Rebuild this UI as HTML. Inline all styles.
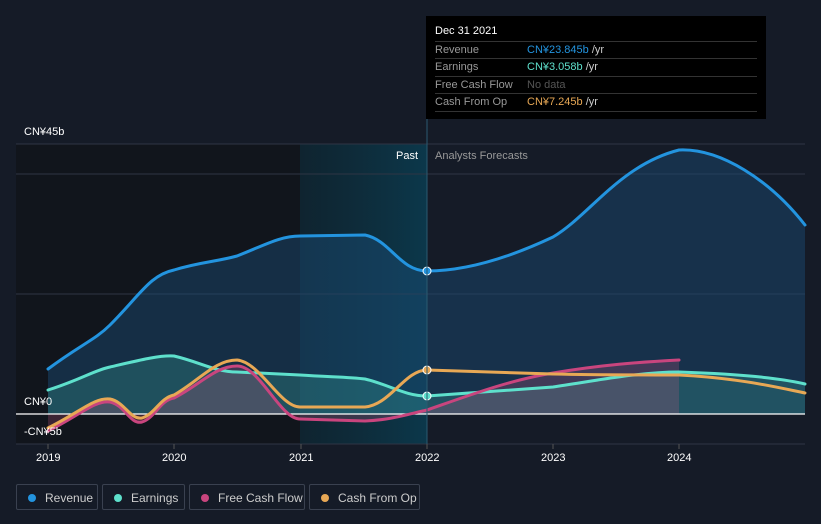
<!DOCTYPE html>
<html><head><meta charset="utf-8"><style>
body{margin:0;width:821px;height:524px;background:#151b27;font-family:"Liberation Sans",sans-serif;overflow:hidden;position:relative}
.t{position:absolute;font-size:11px;color:#fff}
.tip{position:absolute;left:426px;top:16px;width:340px;height:103px;background:#000}
.tip .h{position:absolute;left:9px;top:9px;font-size:11px;color:#fff}
.row{position:absolute;left:9px;width:322px;height:17px;border-top:1px solid #333;font-size:11px;line-height:17px;color:#999}
.row span{position:absolute;left:92px}
.lg{position:absolute;top:484px;height:26px;border:1px solid #3a4150;border-radius:2px;font-size:12px;color:#ccc;line-height:26px;box-sizing:border-box}
.lg i{position:absolute;left:11px;top:9px;width:8px;height:8px;border-radius:50%}
.lg b{font-weight:normal;position:absolute;left:28px}
</style></head><body>
<svg width="821" height="524" style="position:absolute;left:0;top:0">
<defs><linearGradient id="hl" x1="0" x2="1"><stop offset="0" stop-color="#0b2a36" stop-opacity=".6"/><stop offset="1" stop-color="#0b3b4f" stop-opacity=".9"/></linearGradient></defs>
<rect x="16" y="144" width="284" height="300" fill="#11151c"/>
<rect x="300" y="144" width="127" height="300" fill="url(#hl)"/>
<g stroke="#2e3544" stroke-width="1"><line x1="16" y1="144" x2="805" y2="144"/><line x1="16" y1="174" x2="805" y2="174"/><line x1="16" y1="294" x2="805" y2="294"/><line x1="16" y1="444" x2="805" y2="444"/></g>
<path d="M48,369 C80,345 95,340 110,325 C140,295 150,275 174,270 C200,262 215,262 237,256 C265,245 280,236 300,236 L365,235 C390,240 400,271 427,271 C460,271 500,262 553,237 C590,215 620,165 679,150 C720,148 770,180 805,225 L805,414 L48,414Z" fill="#1b4d78" fill-opacity=".45"/>
<path d="M48,390 C80,380 95,370 110,367 C140,360 160,355 174,356 C200,362 215,372 237,372 L300,375 C330,377 350,377 365,379 C390,385 405,396 427,396 L553,387 C600,380 640,372 679,372 C740,374 780,378 805,384 L805,414 L48,414Z" fill="#3fb8a6" fill-opacity=".25"/>
<path d="M48,431 C80,415 95,400 110,402 C125,405 130,425 142,422 C155,418 160,400 174,398 C200,385 215,366 237,366 C260,366 280,419 300,419 L365,421 C390,420 405,415 427,410 C470,395 510,380 553,373 C600,365 640,362 679,360 L679,414 L48,414Z" fill="#c0567f" fill-opacity=".25"/>
<line x1="16" y1="414" x2="805" y2="414" stroke="#fff" stroke-width="1.2"/>
<g fill="none" stroke-width="3" stroke-linecap="round">
<path d="M48,369 C80,345 95,340 110,325 C140,295 150,275 174,270 C200,262 215,262 237,256 C265,245 280,236 300,236 L365,235 C390,240 400,271 427,271 C460,271 500,262 553,237 C590,215 620,165 679,150 C720,148 770,180 805,225" stroke="#2394df"/>
<path d="M48,390 C80,380 95,370 110,367 C140,360 160,355 174,356 C200,362 215,372 237,372 L300,375 C330,377 350,377 365,379 C390,385 405,396 427,396 L553,387 C600,380 640,372 679,372 C740,374 780,378 805,384" stroke="#5ee0cc"/>
<path d="M48,431 C80,415 95,400 110,402 C125,405 130,425 142,422 C155,418 160,400 174,398 C200,385 215,366 237,366 C260,366 280,419 300,419 L365,421 C390,420 405,415 427,410 C470,395 510,380 553,373 C600,365 640,362 679,360" stroke="#c9457e"/>
<path d="M48,428 C80,412 95,397 110,399 C125,402 130,420 142,418 C155,414 160,398 174,395 C200,380 215,360 237,360 C260,362 280,407 300,407 L365,407 C390,405 405,370 427,370 L553,374 C600,375 640,375 679,375 C740,378 780,388 805,393" stroke="#e8a855"/>
</g>
<circle cx="427" cy="271" r="4" fill="#2394df" stroke="#fff" stroke-width="1"/>
<circle cx="427" cy="370" r="4" fill="#e8a855" stroke="#fff" stroke-width="1"/>
<circle cx="427" cy="396" r="4" fill="#5ee0cc" stroke="#fff" stroke-width="1"/>
<line x1="427" y1="119" x2="427" y2="444" stroke="#2a5a70" stroke-width="1"/>
<g stroke="#555" stroke-width="1"><line x1="48" y1="444" x2="48" y2="449"/><line x1="174" y1="444" x2="174" y2="449"/><line x1="301" y1="444" x2="301" y2="449"/><line x1="427" y1="444" x2="427" y2="449"/><line x1="553" y1="444" x2="553" y2="449"/><line x1="679" y1="444" x2="679" y2="449"/></g>
</svg>
<div class="t" style="left:24px;top:126px">CN¥45b</div>
<div class="t" style="left:24px;top:396px">CN¥0</div>
<div class="t" style="left:24px;top:426px">-CN¥5b</div>
<div class="t" style="left:396px;top:150px">Past</div>
<div class="t" style="left:435px;top:150px;color:#999">Analysts Forecasts</div>
<div class="t" style="left:36px;top:452px">2019</div>
<div class="t" style="left:162px;top:452px">2020</div>
<div class="t" style="left:289px;top:452px">2021</div>
<div class="t" style="left:415px;top:452px">2022</div>
<div class="t" style="left:541px;top:452px">2023</div>
<div class="t" style="left:667px;top:452px">2024</div>
<div class="tip"><div class="h">Dec 31 2021</div>
<div class="row" style="top:25px">Revenue<span style="color:#2394df">CN¥23.845b <em style="font-style:normal;color:#ccc">/yr</em></span></div>
<div class="row" style="top:42px">Earnings<span style="color:#5ee0cc">CN¥3.058b <em style="font-style:normal;color:#ccc">/yr</em></span></div>
<div class="row" style="top:60px">Free Cash Flow<span style="color:#555">No data</span></div>
<div class="row" style="top:77px">Cash From Op<span style="color:#e8a855">CN¥7.245b <em style="font-style:normal;color:#ccc">/yr</em></span></div>
<div class="row" style="top:95px;height:0"></div>
</div>
<div class="lg" style="left:16px;width:82px"><i style="background:#2394df"></i><b>Revenue</b></div>
<div class="lg" style="left:102px;width:83px"><i style="background:#5ee0cc"></i><b>Earnings</b></div>
<div class="lg" style="left:189px;width:116px"><i style="background:#c9457e"></i><b>Free Cash Flow</b></div>
<div class="lg" style="left:309px;width:111px"><i style="background:#e8a855"></i><b>Cash From Op</b></div>
</body></html>
